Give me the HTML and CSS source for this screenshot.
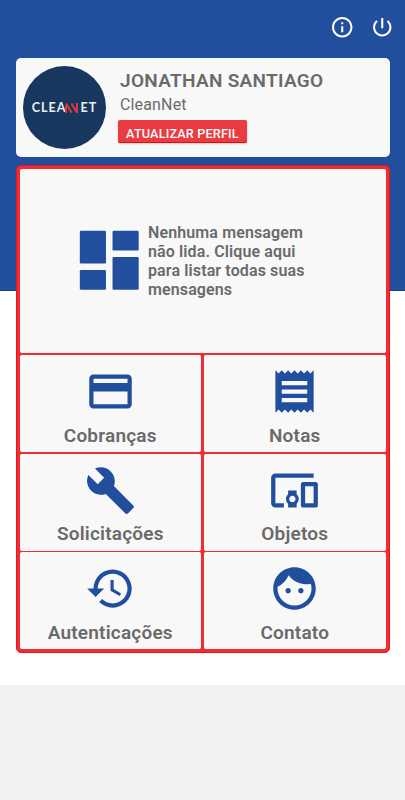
FILE: index.html
```html
<!DOCTYPE html>
<html lang="pt-BR">
<head>
  <meta charset="UTF-8">
  <meta name="viewport" content="width=device-width, initial-scale=1.0">
  <title>CleanNet</title>
  <link rel="stylesheet" href="styles.css">
</head>
<body>

  <div class="screen">
    <!-- Top actions -->
    <div class="topbar">
      <svg class="top-icon" viewBox="0 0 24 24"><path d="M11 7h2v2h-2zm0 4h2v6h-2zm1-9C6.480 2 2 6.480 2 12s4.480 10 10 10 10-4.480 10-10S17.520 2 12 2zm0 18c-4.410 0-8-3.590-8-8s3.590-8 8-8 8 3.590 8 8-3.590 8-8 8z"/></svg>
      <svg class="top-icon" viewBox="0 0 24 24"><path d="M13 3h-2v10h2V3zm4.830 2.170l-1.420 1.420C17.990 7.860 19 9.810 19 12c0 3.870-3.130 7-7 7s-7-3.130-7-7c0-2.190 1.010-4.140 2.580-5.420L6.170 5.170C4.230 6.820 3 9.260 3 12c0 4.970 4.030 9 9 9s9-4.030 9-9c0-2.740-1.230-5.180-3.170-6.830z"/></svg>
    </div>

    <!-- Profile -->
    <div class="profile">
      <div class="logo">
        <span>CLEA</span>
        <svg class="logo-mark" viewBox="0 0 13 10"><path d="M1 10V3M1 .5l5.500 9M6.500 .5l5 8.500M12 10V0"/></svg>
        <span>ET</span>
      </div>
      <div class="profile-info">
        <h1 class="name">JONATHAN SANTIAGO</h1>
        <p class="company">CleanNet</p>
        <button class="update-btn">ATUALIZAR PERFIL</button>
      </div>
    </div>

    <!-- Menu -->
    <div class="menu">
      <div class="tile messages">
        <svg class="messages-icon" viewBox="0 0 24 24"><rect x="3" y="3" width="8" height="10" rx=".4"/><rect x="3" y="15" width="8" height="6" rx=".4"/><rect x="13" y="3" width="8" height="6" rx=".4"/><rect x="13" y="11" width="8" height="10" rx=".4"/></svg>
        <p class="messages-text">Nenhuma mensagem<br>não lida. Clique aqui<br>para listar todas suas<br>mensagens</p>
      </div>
      <div class="tile">
        <svg class="tile-icon" viewBox="0 0 24 24"><path d="M20 4H4c-1.110 0-1.990.89-1.990 2L2 18c0 1.110.89 2 2 2h16c1.110 0 2-.89 2-2V6c0-1.110-.89-2-2-2zm0 14H4v-6h16v6zm0-10H4V6h16v2z"/></svg>
        <span class="label">Cobranças</span>
      </div>
      <div class="tile">
        <svg class="tile-icon" viewBox="0 0 24 24"><path d="M18 17H6v-2h12v2zm0-4H6v-2h12v2zm0-4H6V7h12v2zM3 22l1.500-1.500L6 22l1.500-1.500L9 22l1.500-1.500L12 22l1.500-1.500L15 22l1.500-1.500L18 22l1.500-1.500L21 22V2l-1.500 1.500L18 2l-1.500 1.500L15 2l-1.500 1.500L12 2l-1.500 1.500L9 2 7.500 3.500 6 2 4.500 3.500 3 2v20z"/></svg>
        <span class="label">Notas</span>
      </div>
      <div class="tile">
        <svg class="tile-icon" viewBox="0 0 24 24"><path d="M22.700 19l-9.100-9.100c.9-2.300.4-5-1.500-6.900-2-2-5-2.400-7.400-1.300L9 6 6 9 1.600 4.700C.4 7.100.9 10.100 2.900 12.100c1.900 1.900 4.600 2.400 6.900 1.500l9.100 9.100c.4.4 1 .4 1.400 0l2.300-2.300c.5-.4.5-1.100.1-1.400z"/></svg>
        <span class="label">Solicitações</span>
      </div>
      <div class="tile">
        <svg class="tile-icon" viewBox="0 0 24 24"><path d="M3 6h18V4H3c-1.100 0-2 .9-2 2v12c0 1.100.9 2 2 2h4v-2H3V6zm10 6H9v1.780c-.61.55-1 1.330-1 2.220s.39 1.670 1 2.220V20h4v-1.780c.61-.55 1-1.340 1-2.220s-.39-1.670-1-2.220V12zm-2 5.500c-.83 0-1.500-.67-1.500-1.500s.67-1.500 1.500-1.500 1.500.67 1.500 1.500-.67 1.500-1.500 1.500zM22 8h-6c-.5 0-1 .5-1 1v10c0 .5.500 1 1 1h6c.5 0 1-.5 1-1V9c0-.5-.5-1-1-1zm-1 10h-4v-8h4v8z"/></svg>
        <span class="label">Objetos</span>
      </div>
      <div class="tile">
        <svg class="tile-icon" viewBox="0 0 24 24"><path d="M13 3c-4.970 0-9 4.030-9 9H1l3.890 3.890.07.14L9 12H6c0-3.870 3.130-7 7-7s7 3.130 7 7-3.130 7-7 7c-1.930 0-3.680-.79-4.940-2.060l-1.420 1.420C8.270 19.990 10.510 21 13 21c4.970 0 9-4.030 9-9s-4.030-9-9-9zm-1 5v5l4.280 2.540.72-1.210-3.500-2.080V8H12z"/></svg>
        <span class="label">Autenticações</span>
      </div>
      <div class="tile">
        <svg class="tile-icon" viewBox="0 0 24 24"><path d="M9 11.750c-.69 0-1.250.56-1.250 1.250s.56 1.250 1.250 1.250 1.250-.56 1.250-1.250-.56-1.250-1.250-1.250zm6 0c-.69 0-1.250.56-1.250 1.250s.56 1.250 1.250 1.250 1.250-.56 1.250-1.250-.56-1.250-1.250-1.250zM12 2C6.480 2 2 6.480 2 12s4.480 10 10 10 10-4.480 10-10S17.520 2 12 2zm0 18c-4.410 0-8-3.590-8-8 0-.29.020-.58.050-.86 2.360-1.050 4.230-2.980 5.210-5.370C11.070 8.330 14.050 10 17.420 10c.78 0 1.530-.09 2.250-.26.210.71.330 1.470.33 2.260 0 4.410-3.590 8-8 8z"/></svg>
        <span class="label">Contato</span>
      </div>
    </div>
  </div>

</body>
</html>
```
FILE: styles.css
```css
* { box-sizing: border-box; }
body { margin: 0; background: #f2f2f2; font-family: Roboto, sans-serif; color: #6a6a6a; }
h1, p { margin: 0; }
svg { display: block; }

.screen { height: 684.5px; padding: 15px 15.500px 0; background: linear-gradient(#214f9d 290px, #12409a 290px, #12409a 291px, #fff 291px); }

.topbar { display: flex; justify-content: flex-end; gap: 15px; height: 43px; margin-right: -4.500px; }
.top-icon { width: 24.500px; height: 24.500px; fill: #fff; }

.profile { display: flex; height: 99px; padding: 8px; background: #f8f8f8; border-radius: 5px; }
.logo { display: flex; align-items: center; justify-content: center; flex: none; width: 83px; height: 83px; margin-left: -.5px; padding-top: 2px; border-radius: 50%; background: #17375f; color: #eee; font: 700 12.500px/1 Lato, sans-serif; letter-spacing: 1px; }
.logo-mark { flex: none; width: 13px; height: 10px; margin: 0 2px 1.500px -1px; fill: none; stroke: #e8383f; stroke-width: 1.900; }
.profile-info { padding: 4px 0 0 12px; }
.name { margin-left: 2px; font-size: 19px; line-height: 22px; font-weight: 600; letter-spacing: .3px; white-space: nowrap; }
.company { margin: 3px 0 0 2px; font-size: 16px; line-height: 20px; letter-spacing: .15px; }
.update-btn { display: block; width: 129px; height: 23px; margin-top: 5px; padding: 5px 0 0; border: none; border-bottom: 1px solid #e00d14; border-radius: 2px; background: #ea3b40; color: #fff; font: 500 12.700px/18px Roboto, sans-serif; letter-spacing: .15px; white-space: nowrap; box-shadow: 0 1px 2px rgba(0, 0, 0, .2); }

.menu { display: grid; grid-template-columns: 1fr 1fr; grid-template-rows: 185px 97px 97px 97px; gap: 1.500px 3px; margin-top: 8px; height: 488px; padding: 2.500px 3px; background: #ee2e33; border: 1px solid #e8151a; border-radius: 5px; }
.tile { display: flex; flex-direction: column; align-items: center; padding-top: 11px; background: #f8f8f8; border-radius: 2px; }
.tile-icon { width: 51px; height: 51px; fill: #214f9d; }
.label { margin-top: 6.500px; font-size: 19px; line-height: 24px; font-weight: 600; letter-spacing: .2px; }

.messages { grid-column: span 2; flex-direction: row; margin-bottom: 1px; padding: 0 0 0 50px; }
.messages-icon { width: 78.500px; height: 78.500px; fill: #214f9d; }
.messages-text { font-size: 16px; line-height: 19px; font-weight: 600; letter-spacing: .12px; white-space: nowrap; }
```
